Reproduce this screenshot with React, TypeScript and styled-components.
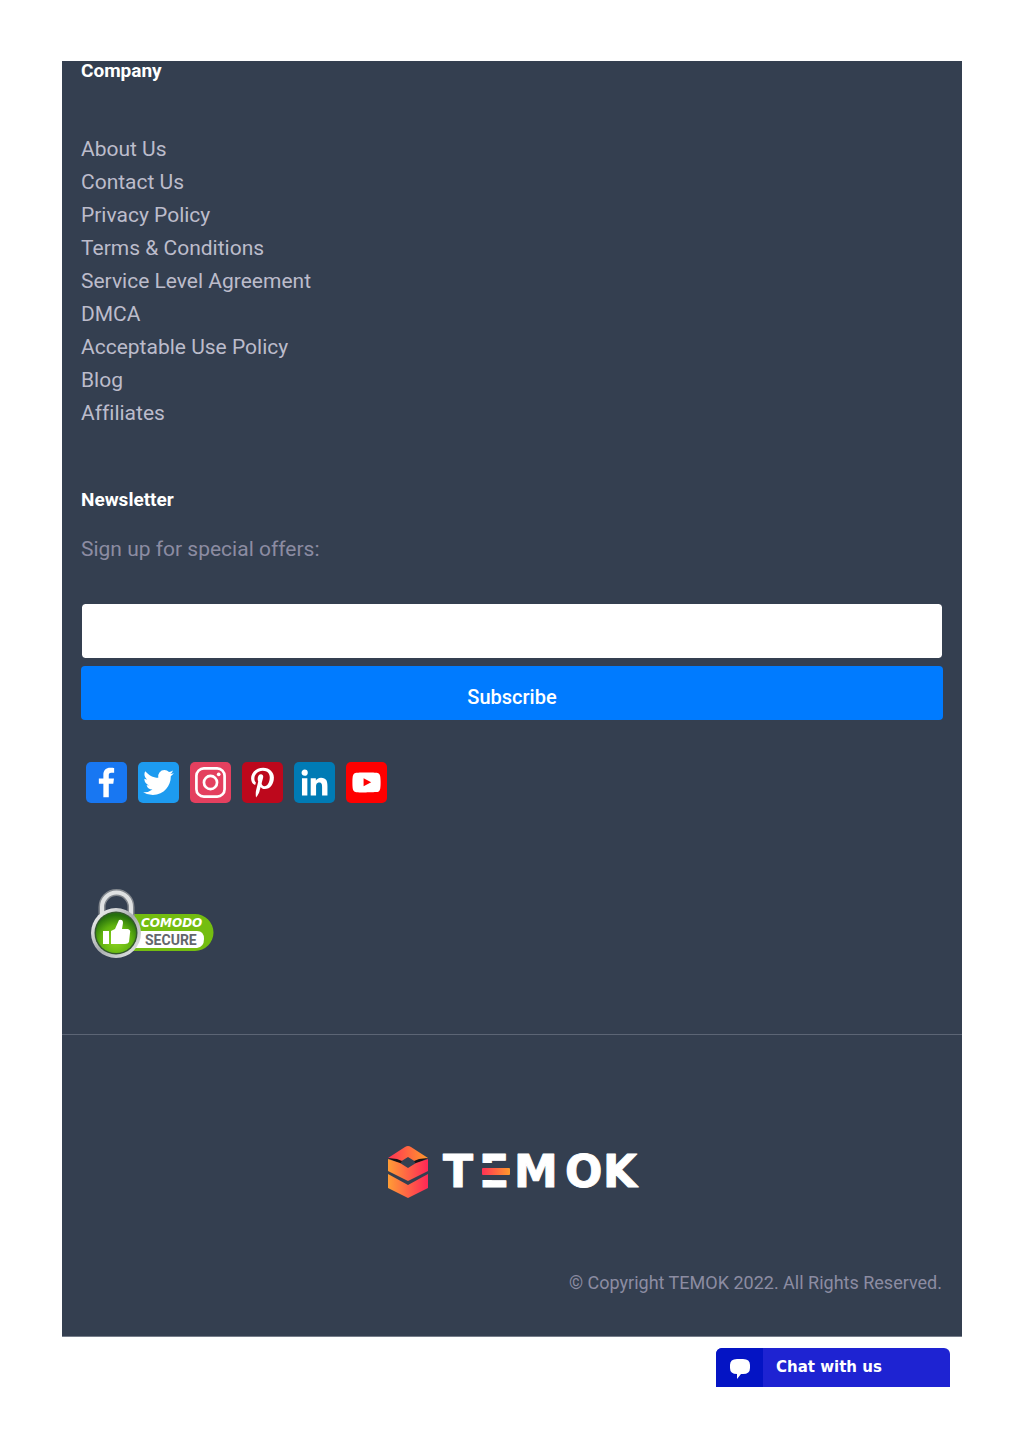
import React from "react";
import styled, { createGlobalStyle } from "styled-components";

const GlobalStyle = createGlobalStyle`
  *, *::before, *::after { box-sizing: border-box; }
  body {
    margin: 0;
    background: #ffffff;
    font-family: Roboto, "Liberation Sans", sans-serif;
    font-variant-ligatures: none;
  }
`;

const Page = styled.div`
  padding: 61px 62px;
`;

const Footer = styled.footer`
  background: #343f50;
  border-bottom: 1px solid #767d8a;
`;

const Main = styled.div`
  padding: 0 19px 75px;
`;

const Heading = styled.h2`
  margin: 0;
  color: #ffffff;
  font-size: 19px;
  line-height: 20px;
  font-weight: 700;
`;

const LinkList = styled.ul`
  list-style: none;
  margin: 52px 0 60px;
  padding: 0;
`;

const LinkItem = styled.li`
  font-size: 21px;
  line-height: 33px;
`;

const FooterLink = styled.a`
  color: #bcbccb;
  text-decoration: none;
`;

const Form = styled.form`
  display: flex;
  flex-direction: column;
  gap: 7px;
`;

const Label = styled.label`
  margin: 23px 0 30px;
  color: #8c8ca2;
  font-size: 21px;
  line-height: 33px;
`;

const EmailInput = styled.input`
  width: 100%;
  height: 56px;
  padding: 0 16px;
  border: 1px solid #343f50;
  border-radius: 4px;
  background: #ffffff;
  background-clip: padding-box;
  font: inherit;
`;

const SubscribeButton = styled.button`
  height: 54px;
  padding: 8px 16px 0;
  border: 0;
  border-radius: 4px;
  background: #007bff;
  color: #ffffff;
  font-family: inherit;
  font-size: 20px;
  font-weight: 500;
  cursor: pointer;
`;

const SocialList = styled.div`
  display: flex;
  flex-wrap: wrap;
  gap: 11px;
  margin: 42px 0 0 5px;
`;

const SocialLink = styled.a<{ $color: string }>`
  width: 41px;
  height: 41px;
  border-radius: 5px;
  background: ${(p) => p.$color};

  svg {
    display: block;
    width: 100%;
    height: 100%;
  }
`;

const Seal = styled.svg`
  display: block;
  width: 124px;
  height: 70px;
  margin: 86px 0 0 10px;
`;

const Bottom = styled.div`
  display: flex;
  flex-direction: column;
  padding: 110px 20px 41px;
  border-top: 1px solid #5c6575;
`;

const LogoLink = styled.a`
  align-self: center;
`;

const Logo = styled.svg`
  display: block;
  width: 250px;
  height: 54px;
  overflow: visible;
`;

const Copyright = styled.p`
  margin: 72px 0 0;
  color: #8c8ca2;
  font-size: 18px;
  line-height: 24px;
  text-align: right;
`;

const ChatButton = styled.button`
  display: flex;
  align-items: stretch;
  width: 234px;
  height: 39px;
  margin: 11px 12px 0 auto;
  padding: 0;
  overflow: hidden;
  border: 0;
  border-radius: 6px 6px 0 0;
  background: #1e23d2;
  color: #ffffff;
  font-family: "DejaVu Sans", Verdana, sans-serif;
  font-size: 15px;
  font-weight: 700;
  line-height: 39px;
  cursor: pointer;
`;

const ChatIcon = styled.span`
  display: flex;
  width: 47px;
  margin-right: 13px;
  align-items: center;
  justify-content: center;
  background: #0414c4;
`;

const companyLinks = [
  "About Us",
  "Contact Us",
  "Privacy Policy",
  "Terms & Conditions",
  "Service Level Agreement",
  "DMCA",
  "Acceptable Use Policy",
  "Blog",
  "Affiliates",
];

const socials = [
  {
    name: "Facebook",
    color: "#1877f2",
    art: <path d="M17.78 27.5V17.008h3.522l.527-4.09h-4.05v-2.61c0-1.182.33-1.99 2.023-1.99h2.166V4.66c-.375-.05-1.66-.16-3.155-.16-3.123 0-5.26 1.905-5.26 5.405v3.016h-3.53v4.09h3.53V27.5h4.223z" />,
  },
  {
    name: "Twitter",
    color: "#1d9bf0",
    art: <path d="M28 8.557a9.913 9.913 0 0 1-2.828.775 4.93 4.93 0 0 0 2.166-2.725 9.738 9.738 0 0 1-3.13 1.194 4.92 4.92 0 0 0-3.593-1.55 4.924 4.924 0 0 0-4.794 6.049c-4.09-.21-7.72-2.17-10.15-5.15a4.942 4.942 0 0 0-.665 2.477c0 1.71.87 3.214 2.19 4.1a4.968 4.968 0 0 1-2.23-.616v.06c0 2.39 1.7 4.38 3.952 4.83-.414.115-.85.174-1.297.174-.318 0-.626-.03-.928-.086a4.935 4.935 0 0 0 4.6 3.42 9.893 9.893 0 0 1-6.114 2.107c-.398 0-.79-.023-1.175-.068a13.953 13.953 0 0 0 7.55 2.213c9.056 0 14.01-7.507 14.01-14.013 0-.213-.005-.426-.015-.637.96-.695 1.795-1.56 2.455-2.55z" />,
  },
  {
    name: "Instagram",
    color: "#e4405f",
    art: (
      <>
        <rect x="5" y="5" width="22" height="22" rx="5.8" fill="none" stroke="#fff" strokeWidth="2.1" />
        <circle cx="16" cy="16" r="5.1" fill="none" stroke="#fff" strokeWidth="2.1" />
        <circle cx="22.4" cy="9.6" r="1.45" />
      </>
    ),
  },
  {
    name: "Pinterest",
    color: "#bd081c",
    art: <path d="M16.539 4.5c-6.277 0-9.442 4.5-9.442 8.253 0 2.272.86 4.293 2.705 5.046.303.125.574.005.662-.33.061-.231.205-.816.27-1.06.088-.331.053-.447-.191-.736-.532-.627-.873-1.439-.873-2.591 0-3.338 2.498-6.327 6.505-6.327 3.548 0 5.497 2.168 5.497 5.062 0 3.81-1.686 7.025-4.188 7.025-1.382 0-2.416-1.142-2.085-2.545.397-1.674 1.166-3.48 1.166-4.689 0-1.081-.581-1.983-1.782-1.983-1.413 0-2.548 1.462-2.548 3.419 0 1.247.421 2.091.421 2.091l-1.699 7.199c-.505 2.137-.076 4.755-.039 5.019.021.158.223.196.314.077.13-.17 1.813-2.247 2.384-4.324.162-.587.929-3.631.929-3.631.46.876 1.801 1.646 3.227 1.646 4.247 0 7.128-3.871 7.128-9.053.003-3.918-3.317-7.568-8.361-7.568z" />,
  },
  {
    name: "LinkedIn",
    color: "#007bb5",
    art: <path d="M6.227 12.61h4.19v13.48h-4.19V12.61zm2.095-6.7a2.43 2.43 0 0 1 0 4.86c-1.344 0-2.428-1.09-2.428-2.43s1.084-2.43 2.428-2.43m4.72 6.7h4.02v1.84h.058c.56-1.058 1.927-2.176 3.965-2.176 4.238 0 5.02 2.792 5.02 6.42v7.395h-4.183v-6.56c0-1.564-.03-3.574-2.178-3.574-2.18 0-2.514 1.7-2.514 3.46v6.668h-4.187V12.61z" />,
  },
  {
    name: "YouTube",
    color: "#ff0000",
    art: <path d="M26.78 11.6s-.215-1.515-.875-2.183c-.837-.876-1.774-.88-2.204-.932-3.075-.222-7.693-.222-7.693-.222h-.01s-4.618 0-7.697.222c-.43.05-1.368.056-2.205.932-.66.668-.874 2.184-.874 2.184S5 13.386 5 15.166v1.67c0 1.78.22 3.56.22 3.56s.215 1.516.874 2.184c.837.875 1.936.85 2.426.94 1.76.17 7.48.22 7.48.22s4.623-.007 7.7-.23c.43-.05 1.37-.056 2.205-.932.66-.668.875-2.184.875-2.184s.22-1.78.22-3.56v-1.67c0-1.78-.22-3.56-.22-3.56zm-13.052 7.254v-6.18l5.944 3.1-5.944 3.08z" />,
  },
];

function ComodoSeal() {
  return (
    <Seal viewBox="0 0 124 70">
      <defs>
        <linearGradient id="metal" x1="0" y1="0" x2="1" y2="1">
          <stop offset="0" stopColor="#ffffff" />
          <stop offset="0.5" stopColor="#a9adb0" />
          <stop offset="1" stopColor="#eceeee" />
        </linearGradient>
        <radialGradient id="greenDisc" cx="0.5" cy="0.7" r="0.65">
          <stop offset="0" stopColor="#8fd51f" />
          <stop offset="0.6" stopColor="#5fb20f" />
          <stop offset="1" stopColor="#26700d" />
        </radialGradient>
      </defs>
      <path d="M28 25h76a18.500 18.500 0 0 1 0 37H28z" fill="#74bd10" />
      <path d="M30 42h76q7 0 7 8t-7 9H30z" fill="#ffffff" />
      <path d="M11 31V18a14.500 14.500 0 0 1 29 0v13" fill="none" stroke="#82878d" strokeWidth="7" />
      <path d="M11 31V18a14.500 14.500 0 0 1 29 0v13" fill="none" stroke="#dfe1e2" strokeWidth="4" />
      <circle cx="25" cy="44" r="25" fill="url(#metal)" />
      <circle cx="25" cy="44" r="21.500" fill="#34592c" />
      <circle cx="25" cy="44" r="20" fill="url(#greenDisc)" />
      <path d="M12 42h6v13h-6zM20 42l4-2 4-9q4-1 4 3l-1 6h6q3 1 2 4l-1 9q-1 2-4 2H20z" fill="#ffffff" />
      <text x="50" y="38" fill="#ffffff" fontFamily="DejaVu Sans, sans-serif" fontSize="12" fontWeight="700" fontStyle="italic">COMODO</text>
      <text x="54" y="56" fill="#62666b" fontFamily="Roboto, sans-serif" fontSize="14" fontWeight="700">SECURE</text>
    </Seal>
  );
}

function TemokLogo() {
  return (
    <Logo viewBox="0 0 250 54">
      <defs>
        <linearGradient id="warm" x1="0" y1="0" x2="1" y2="0">
          <stop offset="0" stopColor="#ff9d35" />
          <stop offset="1" stopColor="#ff2756" />
        </linearGradient>
        <linearGradient id="warmBack" x1="0" y1="0" x2="1" y2="0">
          <stop offset="0" stopColor="#ff3155" />
          <stop offset="1" stopColor="#ff9b2c" />
        </linearGradient>
        <linearGradient id="bars" gradientUnits="userSpaceOnUse" x1="0" y1="10" x2="0" y2="43">
          <stop offset="0.24" stopColor="#fff" />
          <stop offset="0.24" stopColor="#fff" stopOpacity="0" />
          <stop offset="0.77" stopColor="#fff" stopOpacity="0" />
          <stop offset="0.77" stopColor="#fff" />
        </linearGradient>
      </defs>
      <path d="M1 13L18 2q3-2 6 0l17 11-12 4-8-5-8 5z" fill="url(#warmBack)" />
      <path d="M1 13l9 1 5 2-2 3zM41 13l-9 1-5 2 2 3z" fill="#171316" />
      <path d="M1 14l12 4 8 5 8-5 12-4v12L21 36 1 26z" fill="url(#warm)" />
      <path d="M1 29l20 11 20-11v14L21 53 1 43z" fill="url(#warm)" />
      <g fill="#ffffff" stroke="#ffffff" strokeWidth="1" strokeLinejoin="round" fontFamily="DejaVu Sans, sans-serif" fontSize="44" fontWeight="700">
        <text x="56 92 127 178 216" y="42">
          T<tspan fill="url(#bars)" stroke="url(#bars)">E</tspan>MOK
        </text>
      </g>
      <rect x="95" y="23" width="28" height="7" rx="1" fill="url(#warmBack)" />
    </Logo>
  );
}

export default function App() {
  return (
    <Page>
      <GlobalStyle />
      <Footer>
        <Main>
          <Heading>Company</Heading>
          <LinkList>
            {companyLinks.map((text) => (
              <LinkItem key={text}>
                <FooterLink href="#">{text}</FooterLink>
              </LinkItem>
            ))}
          </LinkList>
          <Heading>Newsletter</Heading>
          <Form onSubmit={(e) => e.preventDefault()}>
            <Label htmlFor="email">Sign up for special offers:</Label>
            <EmailInput id="email" type="email" />
            <SubscribeButton type="submit">Subscribe</SubscribeButton>
          </Form>
          <SocialList>
            {socials.map((s) => (
              <SocialLink key={s.name} href="#" $color={s.color} aria-label={s.name}>
                <svg viewBox="0 0 32 32" fill="#ffffff">{s.art}</svg>
              </SocialLink>
            ))}
          </SocialList>
          <ComodoSeal />
        </Main>
        <Bottom>
          <LogoLink href="#">
            <TemokLogo />
          </LogoLink>
          <Copyright>© Copyright TEMOK 2022. All Rights Reserved.</Copyright>
        </Bottom>
      </Footer>
      <ChatButton type="button">
        <ChatIcon>
          <svg width="22" height="22" viewBox="0 0 22 22" fill="#ffffff" aria-hidden="true">
            <path d="M8 2h6q7 0 7 6v3q0 6-7 6h-2l-4 5v-5q-7 0-7-6V8q0-6 7-6z" />
          </svg>
        </ChatIcon>
        Chat with us
      </ChatButton>
    </Page>
  );
}
